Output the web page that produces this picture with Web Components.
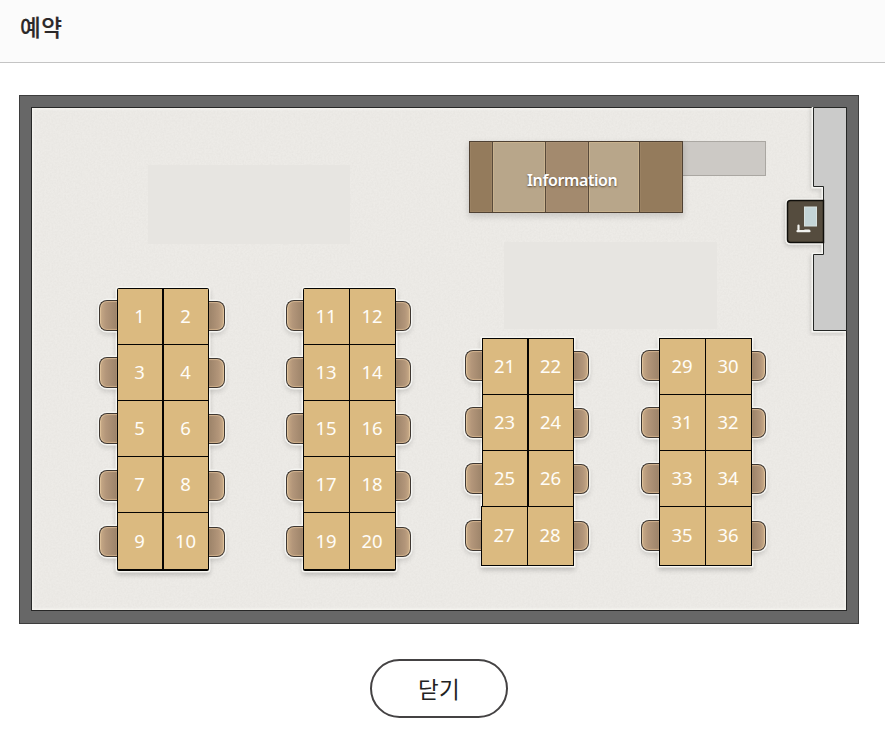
<!DOCTYPE html>
<html lang="ko">
<head>
<meta charset="utf-8">
<title>예약</title>
<style>
html,body{margin:0;height:100%;background:#fff}
body{font-family:"Noto Sans","Noto Sans CJK KR",sans-serif;overflow:hidden}
</style>
</head>
<body>
<reservation-page></reservation-page>
<script>
const define = (name, html, setup) => {
  const template = document.createElement('template');
  template.innerHTML = html;
  customElements.define(name, class extends HTMLElement {
    constructor() {
      super();
      this.attachShadow({mode: 'open'}).append(template.content.cloneNode(true));
    }
    connectedCallback() { if (setup) setup(this, this.shadowRoot); }
  });
};

define('page-title', `
<style>
:host{display:flex;align-items:center;box-sizing:border-box;height:63px;padding:0 20px 11px;background:#fbfbfb;border-bottom:1px solid #c4c4c4}
h1{margin:0;font:500 22.5px/32px "Noto Sans CJK KR",sans-serif;color:#2b2829;letter-spacing:.6px;-webkit-text-stroke:.2px #2b2829}
</style><h1><slot></slot></h1>`);

define('close-button', `
<style>
:host{display:block}
button{box-sizing:border-box;display:flex;align-items:center;justify-content:center;width:138px;height:59px;padding:0 0 2px;border:2px solid #444243;border-radius:30px;background:#fff;color:#222;font:400 22.5px/30px "Noto Sans CJK KR",sans-serif;letter-spacing:.3px}
</style><button><slot></slot></button>`);

define('desk-chair', `
<style>
:host{display:block;box-sizing:border-box;width:var(--chair,17px);height:31px;border:1.5px solid #3e3731;border-right:0;border-radius:8px 0 0 8px;
background:linear-gradient(90deg,#c9ab87 0,#b3967a 35%,#9c8369 100%);box-shadow:inset 1px 0 1px #dfc29c,inset 0 1px 1px #d0b18e,inset 0 -1px 1px #cbab87,0 0 0 1.5px #f5f5f2,0 3px 5px 1px #0002}
:host([right]){transform:scaleX(-1);height:30px}
</style>`);

define('desk-seat', `
<style>
:host{display:flex;align-items:center;justify-content:center;background:#dbba80;color:#fffdf8;font:400 18.5px/24px "Noto Sans",sans-serif}
span{margin:-1px 1px 0 0}
</style><span><slot></slot></span>`);

/* first, rows: seat range; mid: thickness of the centre line; l, r: chair depth on each side */
define('desk-block', `
<style>
:host{position:absolute;display:flex;align-items:flex-start}
.chairs{position:relative;z-index:1;display:grid;grid-auto-rows:56.5px;padding-top:12px;clip-path:inset(-9px 0 -9px -9px)}
.chairs.r{padding-top:13px;clip-path:inset(-9px -9px -9px 0)}
.desk{display:flex;flex-direction:column;gap:1px;padding:1px;background:#050402;box-shadow:0 0 0 1.5px #f7f6f1,0 3px 5px 1px #0003}
:host([rounded]) .desk{border-radius:2px;padding-bottom:2px}
.row{display:grid;grid-template-columns:1fr 1fr;height:55px;background:#050402}
:host([wide-end]) .row:last-child{margin-left:-1px;box-shadow:-1px 0 #050402,-1px -1px #050402,-1px 1px #050402;position:relative;z-index:2}
</style>
<div class="chairs l"></div><div class="desk"></div><div class="chairs r"></div>`,
(host, root) => {
  const first = +host.getAttribute('first'), rows = +host.getAttribute('rows');
  const mid = +host.getAttribute('mid');
  const [left, desk, right] = root.querySelectorAll('div');
  left.style.setProperty('--chair', host.getAttribute('l') + 'px');
  right.style.setProperty('--chair', host.getAttribute('r') + 'px');
  desk.style.width = host.getAttribute('width') - 2 + 'px';
  for (let i = 0; i < rows; i++) {
    const row = document.createElement('div');
    row.className = 'row';
    const end = i === rows - 1;
    row.style.columnGap = (end && host.hasAttribute('wide-end') ? 1 : mid) + 'px';
    if (end) row.style.height = host.getAttribute('end') + 'px';
    for (let j = 0; j < 2; j++) {
      const seat = document.createElement('desk-seat');
      seat.textContent = first + i * 2 + j;
      if (end) seat.style.paddingBottom = host.getAttribute('end') - 56 + 'px';
      row.append(seat);
    }
    desk.append(row);
    left.append(document.createElement('desk-chair'));
    const chair = document.createElement('desk-chair');
    chair.setAttribute('right', '');
    right.append(chair);
  }
});

define('info-counter', `
<style>
:host{position:absolute;left:450px;top:46px;display:flex;align-items:flex-start}
.counter{position:relative;z-index:1;box-sizing:border-box;width:213.5px;height:72px;border:1px solid #4f4133;display:grid;grid-template-columns:22px 52px 42px 50px 1fr;gap:1px;background:#594a3a;box-shadow:0 3px 6px 1px #0002}
i{background:#947b5c;box-shadow:inset 0 0 0 1px #a2896890}
i:nth-child(2),i:nth-child(4){background:#b8a68a;box-shadow:inset 0 0 0 1px #c8b28f}
i:nth-child(3){background:#a38a6e;box-shadow:inset 0 0 0 1px #b0967a90}
.label{position:absolute;inset:6px 7px 0 0;display:flex;align-items:center;justify-content:center;color:#fff;font:600 16px/20px "Noto Sans",sans-serif;letter-spacing:-.4px;text-shadow:0 1px 2px #5a4936}
.side{box-sizing:border-box;width:83.5px;height:35px;background:#ccc9c5;border:1px solid #aaa7a2;border-left:0}
</style>
<div class="counter"><i></i><i></i><i></i><i></i><i></i><span class="label"><slot></slot></span></div><div class="side"></div>`);

define('wall-kiosk', `
<style>:host{position:absolute;left:762px;top:12px}svg{display:block}</style>
<svg width="66" height="229" viewBox="0 1 66 229">
<defs><filter id="s" x="-20%" y="-10%" width="140%" height="120%"><feDropShadow dx="-1" dy="2" stdDeviation="2" flood-opacity=".16"/></filter></defs>
<g filter="url(#s)">
<path d="M32.500-3V80.500H42.500V148.500H32.500V224.500H65" fill="none" stroke="#f6f6f3" stroke-width="3.500"/>
<path d="M42.500 94.500H9.500Q6.500 94.500 6.500 97.500V133.500Q6.500 136.500 9.500 136.500H42.500Z" fill="#554c3e" stroke="#f8f7f3" stroke-width="4"/></g>
<path d="M32.500 1.500H65.500V224.500H32.500V148.500H42.500V80.500H32.500Z" fill="#cbcbca" stroke="#252725"/>
<path d="M42.500 94.500H9.500Q6.500 94.500 6.500 97.500V133.500Q6.500 136.500 9.500 136.500H42.500Z" fill="#554c3e" stroke="#100f0b" stroke-width="1.500"/>
<rect x="23.500" y="101" width="12" height="19" fill="#c4d5d7" stroke="#d7e1df"/>
<path d="M17.500 119.500V123.500M16.500 125.200H28.500M24 124.500H28" fill="none" stroke="#f2f3ef" stroke-width="2.200" stroke-linecap="round"/>
</svg>`);

define('floor-plan', `
<style>
:host{position:relative;display:block;box-sizing:border-box;width:840px;height:529px;border:1px solid #3d3d3d;background:#676767;padding:11px}
.floor{box-sizing:border-box;width:816px;height:504px;border:1px solid #272727;background:#edebe7;overflow:hidden;position:relative}
.floor::after{content:"";position:absolute;inset:0;box-shadow:inset 0 0 3px 1px #f8f7f2}
.grain{display:block;opacity:.12}
.patch{position:absolute;background:#e7e5e1}
.objects{position:absolute;inset:-1px}
</style>
<div class="floor"><svg class="grain" width="814" height="502"><filter id="n"><feTurbulence type="fractalNoise" baseFrequency=".55" numOctaves="2" seed="4"/><feColorMatrix values="0 0 0 0 .5  0 0 0 0 .48  0 0 0 0 .45  1.5 0 0 0 -.45"/></filter><rect width="100%" height="100%" filter="url(#n)"/></svg>
<div class="patch" style="left:116px;top:57px;width:202px;height:79px"></div><div class="patch" style="left:472px;top:134px;width:213px;height:87px"></div></div>
<div class="objects"><slot></slot></div>`);

define('reservation-page', `
<style>
:host{display:flex;flex-direction:column;height:731px}
main{display:flex;flex-direction:column;align-items:flex-start;padding:32px 19px 0}
close-button{margin:35px 0 0 351px}
</style>
<page-title>예약</page-title>
<main>
<floor-plan>
<info-counter>Information</info-counter>
<wall-kiosk></wall-kiosk>
<desk-block first="1" rows="5" mid="2" width="92" end="56" l="18" r="16" rounded style="left:80px;top:193px"></desk-block>
<desk-block first="11" rows="5" mid="1" width="93" end="56" l="17" r="15" rounded style="left:267px;top:193px"></desk-block>
<desk-block first="21" rows="4" mid="2" width="92" end="58" l="17" r="15" wide-end style="left:446px;top:243px"></desk-block>
<desk-block first="29" rows="4" mid="1" width="93" end="58" l="18" r="14" style="left:622px;top:243px"></desk-block>
</floor-plan>
<close-button>닫기</close-button>
</main>`);
</script>
</body>
</html>
